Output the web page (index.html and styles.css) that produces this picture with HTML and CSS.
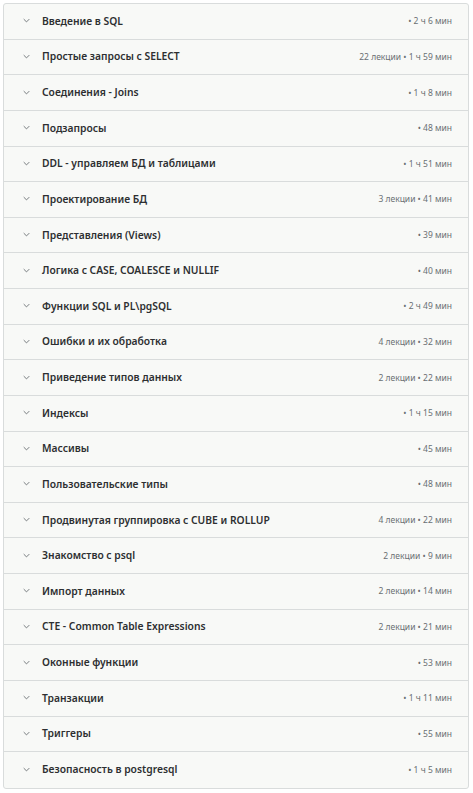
FILE: index.html
```html
<!DOCTYPE html>
<html lang="ru">
<head>
<meta charset="utf-8">
<link rel="stylesheet" href="styles.css">
</head>
<body>
<div class="curriculum">
  <div class="row"><span class="chev"><svg viewBox="0 0 10 6" width="7" height="5"><path d="M1 1l4 4 4-4" fill="none" stroke="#6a6f73" stroke-width="1.3"/></svg></span><span class="title">Введение в SQL</span><span class="meta">• 2 ч 6 мин</span></div>
  <div class="row"><span class="chev"><svg viewBox="0 0 10 6" width="7" height="5"><path d="M1 1l4 4 4-4" fill="none" stroke="#6a6f73" stroke-width="1.3"/></svg></span><span class="title">Простые запросы с SELECT</span><span class="meta">22 лекции • 1 ч 59 мин</span></div>
  <div class="row"><span class="chev"><svg viewBox="0 0 10 6" width="7" height="5"><path d="M1 1l4 4 4-4" fill="none" stroke="#6a6f73" stroke-width="1.3"/></svg></span><span class="title">Соединения - Joins</span><span class="meta">• 1 ч 8 мин</span></div>
  <div class="row"><span class="chev"><svg viewBox="0 0 10 6" width="7" height="5"><path d="M1 1l4 4 4-4" fill="none" stroke="#6a6f73" stroke-width="1.3"/></svg></span><span class="title">Подзапросы</span><span class="meta">• 48 мин</span></div>
  <div class="row"><span class="chev"><svg viewBox="0 0 10 6" width="7" height="5"><path d="M1 1l4 4 4-4" fill="none" stroke="#6a6f73" stroke-width="1.3"/></svg></span><span class="title">DDL - управляем БД и таблицами</span><span class="meta">• 1 ч 51 мин</span></div>
  <div class="row"><span class="chev"><svg viewBox="0 0 10 6" width="7" height="5"><path d="M1 1l4 4 4-4" fill="none" stroke="#6a6f73" stroke-width="1.3"/></svg></span><span class="title">Проектирование БД</span><span class="meta">3 лекции • 41 мин</span></div>
  <div class="row"><span class="chev"><svg viewBox="0 0 10 6" width="7" height="5"><path d="M1 1l4 4 4-4" fill="none" stroke="#6a6f73" stroke-width="1.3"/></svg></span><span class="title">Представления (Views)</span><span class="meta">• 39 мин</span></div>
  <div class="row"><span class="chev"><svg viewBox="0 0 10 6" width="7" height="5"><path d="M1 1l4 4 4-4" fill="none" stroke="#6a6f73" stroke-width="1.3"/></svg></span><span class="title">Логика с CASE, COALESCE и NULLIF</span><span class="meta">• 40 мин</span></div>
  <div class="row"><span class="chev"><svg viewBox="0 0 10 6" width="7" height="5"><path d="M1 1l4 4 4-4" fill="none" stroke="#6a6f73" stroke-width="1.3"/></svg></span><span class="title">Функции SQL и PL\pgSQL</span><span class="meta">• 2 ч 49 мин</span></div>
  <div class="row"><span class="chev"><svg viewBox="0 0 10 6" width="7" height="5"><path d="M1 1l4 4 4-4" fill="none" stroke="#6a6f73" stroke-width="1.3"/></svg></span><span class="title">Ошибки и их обработка</span><span class="meta">4 лекции • 32 мин</span></div>
  <div class="row"><span class="chev"><svg viewBox="0 0 10 6" width="7" height="5"><path d="M1 1l4 4 4-4" fill="none" stroke="#6a6f73" stroke-width="1.3"/></svg></span><span class="title">Приведение типов данных</span><span class="meta">2 лекции • 22 мин</span></div>
  <div class="row"><span class="chev"><svg viewBox="0 0 10 6" width="7" height="5"><path d="M1 1l4 4 4-4" fill="none" stroke="#6a6f73" stroke-width="1.3"/></svg></span><span class="title">Индексы</span><span class="meta">• 1 ч 15 мин</span></div>
  <div class="row"><span class="chev"><svg viewBox="0 0 10 6" width="7" height="5"><path d="M1 1l4 4 4-4" fill="none" stroke="#6a6f73" stroke-width="1.3"/></svg></span><span class="title">Массивы</span><span class="meta">• 45 мин</span></div>
  <div class="row"><span class="chev"><svg viewBox="0 0 10 6" width="7" height="5"><path d="M1 1l4 4 4-4" fill="none" stroke="#6a6f73" stroke-width="1.3"/></svg></span><span class="title">Пользовательские типы</span><span class="meta">• 48 мин</span></div>
  <div class="row"><span class="chev"><svg viewBox="0 0 10 6" width="7" height="5"><path d="M1 1l4 4 4-4" fill="none" stroke="#6a6f73" stroke-width="1.3"/></svg></span><span class="title">Продвинутая группировка с CUBE и ROLLUP</span><span class="meta">4 лекции • 22 мин</span></div>
  <div class="row"><span class="chev"><svg viewBox="0 0 10 6" width="7" height="5"><path d="M1 1l4 4 4-4" fill="none" stroke="#6a6f73" stroke-width="1.3"/></svg></span><span class="title">Знакомство с psql</span><span class="meta">2 лекции • 9 мин</span></div>
  <div class="row"><span class="chev"><svg viewBox="0 0 10 6" width="7" height="5"><path d="M1 1l4 4 4-4" fill="none" stroke="#6a6f73" stroke-width="1.3"/></svg></span><span class="title">Импорт данных</span><span class="meta">2 лекции • 14 мин</span></div>
  <div class="row"><span class="chev"><svg viewBox="0 0 10 6" width="7" height="5"><path d="M1 1l4 4 4-4" fill="none" stroke="#6a6f73" stroke-width="1.3"/></svg></span><span class="title">CTE - Common Table Expressions</span><span class="meta">2 лекции • 21 мин</span></div>
  <div class="row"><span class="chev"><svg viewBox="0 0 10 6" width="7" height="5"><path d="M1 1l4 4 4-4" fill="none" stroke="#6a6f73" stroke-width="1.3"/></svg></span><span class="title">Оконные функции</span><span class="meta">• 53 мин</span></div>
  <div class="row"><span class="chev"><svg viewBox="0 0 10 6" width="7" height="5"><path d="M1 1l4 4 4-4" fill="none" stroke="#6a6f73" stroke-width="1.3"/></svg></span><span class="title">Транзакции</span><span class="meta">• 1 ч 11 мин</span></div>
  <div class="row"><span class="chev"><svg viewBox="0 0 10 6" width="7" height="5"><path d="M1 1l4 4 4-4" fill="none" stroke="#6a6f73" stroke-width="1.3"/></svg></span><span class="title">Триггеры</span><span class="meta">• 55 мин</span></div>
  <div class="row"><span class="chev"><svg viewBox="0 0 10 6" width="7" height="5"><path d="M1 1l4 4 4-4" fill="none" stroke="#6a6f73" stroke-width="1.3"/></svg></span><span class="title">Безопасность в postgresql</span><span class="meta">• 1 ч 5 мин</span></div>
</div>
</body>
</html>
```

FILE: styles.css
```css
html, body {
  margin: 0;
  padding: 0;
  background: #ffffff;
}
body {
  padding: 3px 4px 0 3px;
  font-family: "Noto Sans", "Open Sans", sans-serif;
}
.curriculum {
  width: 466px;
  box-sizing: border-box;
  border: 1px solid #d9dcdc;
  border-radius: 3px;
  background: #f8f9f7;
  display: flex;
  flex-direction: column;
  overflow: hidden;
}
.row {
  display: flex;
  align-items: center;
  height: 35.64px;
  box-sizing: border-box;
  border-bottom: 1px solid #d9dcdc;
  padding: 0 16px 0 19px;
}
.row:last-child {
  border-bottom: none;
}
.chev {
  display: flex;
  align-items: center;
  width: 19px;
  flex: none;
  margin-top: -1px;
}
.chev svg {
  display: block;
}
.title {
  font-size: 10.3px;
  font-weight: 600;
  color: #2d2f31;
  flex: 1;
  white-space: nowrap;
  margin-top: -1px;
}
.meta {
  font-size: 8.5px;
  color: #6a6f73;
  white-space: nowrap;
  margin-top: -1px;
}
```
